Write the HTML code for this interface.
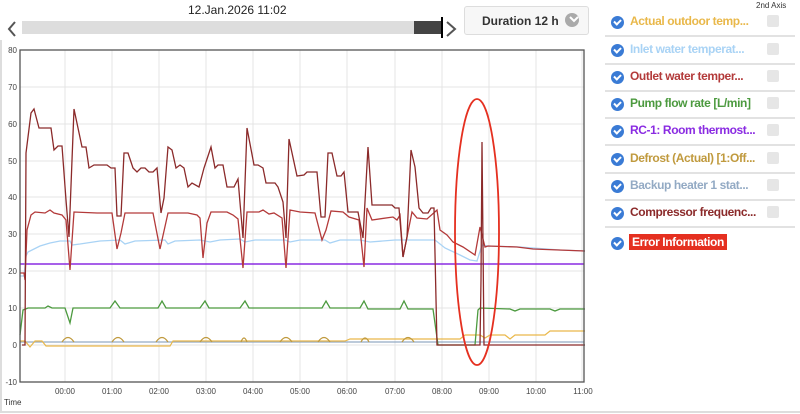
<!DOCTYPE html>
<html><head><meta charset="utf-8"><style>
html,body{margin:0;padding:0;background:#fff;width:800px;height:414px;overflow:hidden;font-family:"Liberation Sans",sans-serif}
.frame{position:absolute;left:0;top:40px;width:798px;height:371px;border-left:2px solid #ddd;border-bottom:2px solid #ddd}
.date{position:absolute;left:188px;top:3px;font-size:12px;color:#222}
.dur{position:absolute;left:464px;top:6px;width:123px;height:27px;border:1px solid #ddd;border-radius:3px;background:#f7f7f7;font-size:12px;font-weight:bold;color:#333}
.dur span{position:absolute;left:17px;top:7px}
.dur i{position:absolute;right:9px;top:6px;width:14px;height:14px;border-radius:50%;background:#aaa}
.leg{position:absolute;left:605px;width:190px;height:27px;border-bottom:2px solid #e2e2e2}
.leg .c{position:absolute;left:6px;top:8px;width:13px;height:13px;border-radius:50%;background:#3a7bd5}
.leg .c:after{content:"";position:absolute;left:3px;top:3px;width:5px;height:3px;border-left:2px solid #fff;border-bottom:2px solid #fff;transform:rotate(-45deg)}
.leg .t{position:absolute;left:25px;top:6px;font-size:12px;letter-spacing:-0.4px;font-weight:bold;white-space:nowrap}
.leg .b{position:absolute;left:162px;top:7px;width:12px;height:12px;border-radius:2px;background:#e6e6e6}
.ax{position:absolute;left:756px;top:1px;font-size:8px;color:#333}
</style></head><body>
<div class="frame"></div>
<div class="date">12.Jan.2026 11:02</div>
<div class="dur"><span>Duration 12 h</span><i></i></div>
<div class="ax">2nd Axis</div>
<div class="leg" style="top:8px"><div class="c"></div><div class="t" style="color:#e9b84a">Actual outdoor temp...</div><div class="b"></div></div>
<div class="leg" style="top:36px"><div class="c"></div><div class="t" style="color:#a9d3f5">Inlet water temperat...</div><div class="b"></div></div>
<div class="leg" style="top:63px"><div class="c"></div><div class="t" style="color:#b33a3a">Outlet water temper...</div><div class="b"></div></div>
<div class="leg" style="top:90px"><div class="c"></div><div class="t" style="color:#4c9a3f">Pump flow rate [L/min]</div><div class="b"></div></div>
<div class="leg" style="top:117px"><div class="c"></div><div class="t" style="color:#8a2be2">RC-1: Room thermost...</div><div class="b"></div></div>
<div class="leg" style="top:145px"><div class="c"></div><div class="t" style="color:#c09a3e">Defrost (Actual) [1:Off...</div><div class="b"></div></div>
<div class="leg" style="top:172px"><div class="c"></div><div class="t" style="color:#93aac4">Backup heater 1 stat...</div><div class="b"></div></div>
<div class="leg" style="top:199px"><div class="c"></div><div class="t" style="color:#8b2a2a">Compressor frequenc...</div><div class="b"></div></div>
<div class="leg" style="top:229px;border:0"><div class="c"></div><div class="t" style="color:#fff;background:#e53020;padding:1px 3px;top:5px;left:24px">Error Information</div></div>
<svg width="800" height="414" style="position:absolute;left:0;top:0" font-family="Liberation Sans, sans-serif">
<polyline points="15,22 9,29 15,36" fill="none" stroke="#555" stroke-width="2"/>
<rect x="22" y="21" width="420" height="13" fill="#ddd"/>
<rect x="414" y="21" width="28" height="13" fill="#444"/>
<rect x="441" y="17" width="2" height="21" fill="#000"/>
<polyline points="447,22 455,29 447,36" fill="none" stroke="#555" stroke-width="2"/>
<polyline points="570,17 574,21 578,17" fill="none" stroke="#fff" stroke-width="2"/>
<g stroke="#e4e4e4" stroke-width="1">
<line x1="20" y1="87" x2="584" y2="87"/><line x1="20" y1="124" x2="584" y2="124"/><line x1="20" y1="161" x2="584" y2="161"/><line x1="20" y1="197" x2="584" y2="197"/><line x1="20" y1="234" x2="584" y2="234"/><line x1="20" y1="271" x2="584" y2="271"/><line x1="20" y1="308" x2="584" y2="308"/><line x1="20" y1="345" x2="584" y2="345"/>
<line x1="65" y1="50" x2="65" y2="382"/><line x1="112" y1="50" x2="112" y2="382"/><line x1="159" y1="50" x2="159" y2="382"/><line x1="206" y1="50" x2="206" y2="382"/><line x1="253" y1="50" x2="253" y2="382"/><line x1="300" y1="50" x2="300" y2="382"/><line x1="347" y1="50" x2="347" y2="382"/><line x1="395" y1="50" x2="395" y2="382"/><line x1="442" y1="50" x2="442" y2="382"/><line x1="489" y1="50" x2="489" y2="382"/><line x1="536" y1="50" x2="536" y2="382"/><line x1="582" y1="50" x2="582" y2="382"/>
</g>
<g font-size="8" fill="#444" text-anchor="end">
<text x="17" y="53">80</text><text x="17" y="90">70</text><text x="17" y="127">60</text><text x="17" y="164">50</text><text x="17" y="200">40</text><text x="17" y="237">30</text><text x="17" y="274">20</text><text x="17" y="311">10</text><text x="17" y="348">0</text><text x="17" y="385">-10</text>
</g>
<g font-size="8" fill="#444" text-anchor="middle">
<text x="65" y="394">00:00</text><text x="112" y="394">01:00</text><text x="159" y="394">02:00</text><text x="206" y="394">03:00</text><text x="253" y="394">04:00</text><text x="300" y="394">05:00</text><text x="347" y="394">06:00</text><text x="395" y="394">07:00</text><text x="442" y="394">08:00</text><text x="489" y="394">09:00</text><text x="536" y="394">10:00</text><text x="583" y="394">11:00</text>
</g>
<text x="4" y="405" font-size="8" fill="#333">Time</text>
<line x1="20" y1="264" x2="584" y2="264" stroke="#8a2be2" stroke-width="1.5"/>
<line x1="20" y1="342" x2="584" y2="342" stroke="#93aac4" stroke-width="1.2"/>
<polyline fill="none" stroke="#e9b84a" stroke-width="1.2" points="20,341 25,341 30,347 35,341 42,341 46,346 170,346 173,341 345,341 350,339 460,339 465,335 480,335 485,338 490,335 505,335 510,339 515,335 545,335 550,331 585,331"/>
<g fill="none" stroke="#c09a3e" stroke-width="1.2">
<path d="M62,342 Q68,333 74,342"/><path d="M112,342 Q118,333 124,342"/><path d="M156,342 Q162,333 168,342"/><path d="M200,342 Q206,333 212,342"/><path d="M241,342 Q244,334 247,342"/><path d="M280,342 Q286,333 292,342"/><path d="M318,342 Q324,333 330,342"/><path d="M361,342 Q365,334 369,342"/><path d="M402,342 Q408,333 414,342"/>
</g>
<polyline fill="none" stroke="#4c9a3f" stroke-width="1.3" points="20,335 23,310 28,308 45,308 48,306 52,308 65,308 70,323 73,308 110,308 115,301 120,308 158,308 162,301 166,308 200,308 205,301 209,308 240,308 245,301 249,308 322,308 326,301 330,308 360,308 364,301 368,309 400,309 404,301 408,309 433,309 438,345 475,345 478,310 480,308 510,309 515,311 520,309 550,309 555,311 560,309 585,309"/>
<polyline fill="none" stroke="#a9d3f5" stroke-width="1.3" points="20,276 24,276 26,256 28,252 40,246 50,243 60,241 70,241 72,245 80,244 100,241 120,240 125,244 135,241 165,240 168,244 175,241 200,240 210,242 220,240 240,239 245,242 255,240 285,240 290,242 300,240 325,240 330,243 340,240 360,240 370,242 395,240 435,240 445,248 460,255 470,260 477,261 482,245 488,246 520,247 560,250 585,251"/>
<polyline fill="none" stroke="#b33a3a" stroke-width="1.3" points="20,273 24,273 25,280 27,230 31,215 35,212 45,213 50,210 54,213 62,215 66,220 70,270 74,212 97,213 112,213 117,249 121,233 125,213 153,213 160,249 168,213 188,213 197,215 200,218 203,258 207,223 211,212 227,212 233,215 238,219 243,268 247,212 259,212 263,210 269,214 274,213 282,218 286,268 290,210 300,212 315,213 322,240 326,230 331,211 343,212 349,217 359,220 364,267 367,208 372,220 393,217 397,220 400,215 403,257 407,237 412,212 417,218 427,219 437,210 440,230 447,235 453,242 463,247 475,255 480,227 485,247 488,246 517,247 533,249 585,251"/>
<polyline fill="none" stroke="#8b2a2a" stroke-width="1.3" points="22,345 25,345 26,153 31,113 34,109 39,128 51,128 54,150 58,146 62,146 66,200 69,237 74,109 82,147 86,147 89,168 94,165 107,165 111,168 115,168 117,216 121,216 124,153 128,153 133,168 137,172 141,168 145,168 149,172 153,172 157,168 161,213 164,198 168,147 172,150 176,168 180,165 184,168 188,187 192,183 199,187 204,168 211,147 215,168 218,165 223,165 227,187 234,187 238,179 243,238 247,128 254,165 258,165 263,168 266,183 275,183 278,187 283,202 286,238 289,139 297,176 304,175 307,172 317,172 321,217 325,217 328,153 332,153 337,176 341,176 344,172 348,212 358,212 363,238 368,147 372,205 392,205 395,208 399,208 403,257 407,237 411,150 415,167 419,208 423,213 428,213 431,208 434,208 437,345 480,345 481,280 482,142 484,345 585,345"/>
<rect x="20" y="50" width="564" height="332" fill="none" stroke="#555" stroke-width="1.3"/>
<ellipse cx="477" cy="232" rx="22" ry="133" fill="none" stroke="#e53020" stroke-width="1.8"/>
</svg>
</body></html>
